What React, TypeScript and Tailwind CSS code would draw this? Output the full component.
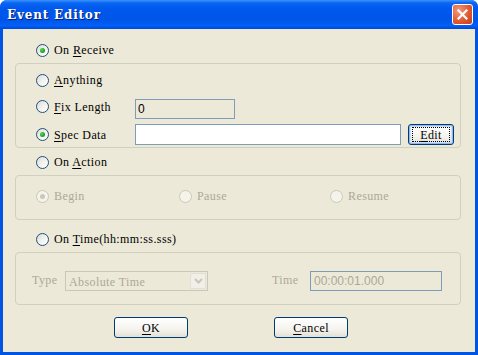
import React from "react";

const FONT = "font-['Liberation_Serif',serif] text-[12px] tracking-[0.4px] leading-none";

function Radio({ checked, disabled, children }: { checked?: boolean; disabled?: boolean; children: React.ReactNode }) {
  return (
    <div className="flex items-center gap-[5px]">
      <div
        className={
          "w-[13px] h-[13px] rounded-full border flex items-center justify-center shrink-0 " +
          (disabled
            ? "border-[#cac8bb] bg-[#f5f4ea]"
            : "border-[#1c5180] bg-[linear-gradient(135deg,#dcdbd5_0%,#f4f3ee_55%,#ffffff_100%)]")
        }
      >
        {checked && (
          <div
            className={
              "w-[5px] h-[5px] rounded-full " +
              (disabled ? "bg-[#cac8bb]" : "bg-[radial-gradient(circle_at_35%_35%,#55d955,#21a121_60%,#1a8a1a)]")
            }
          />
        )}
      </div>
      <span className={FONT + (disabled ? " text-[#aca899]" : " text-black")}>{children}</span>
    </div>
  );
}

function U({ children }: { children: React.ReactNode }) {
  return <span className="underline underline-offset-2">{children}</span>;
}

function Group({ className, children }: { className: string; children: React.ReactNode }) {
  return <div className={"w-[446px] border border-[#d0d0bf] rounded-[4px] box-border " + className}>{children}</div>;
}

function XpButton({ children, focused, w }: { children: React.ReactNode; focused?: boolean; w: string }) {
  return (
    <div
      className={
        w +
        " h-[21px] rounded-[3px] border border-[#003c74] bg-[linear-gradient(180deg,#ffffff_0%,#f4f3ee_60%,#e3e0d4_100%)] flex items-center justify-center box-border " +
        (focused ? "shadow-[inset_0_0_0_1px_#96b8ec,inset_0_0_0_2px_#cde0f8]" : "")
      }
    >
      <div
        className={
          "flex items-center justify-center " +
          (focused ? "border border-dotted border-black w-[calc(100%-6px)] h-[15px]" : "")
        }
      >
        <span className={FONT + " text-black"}>{children}</span>
      </div>
    </div>
  );
}

export default function App() {
  return (
    <div className="w-[478px] h-[355px] bg-[#0055e5] rounded-t-[7px] flex flex-col overflow-hidden">
      {/* title bar */}
      <div className="h-[29px] shrink-0 flex items-center justify-between pl-[7px] pr-[5px] bg-[linear-gradient(180deg,#3d95ff_0%,#0a66f0_10%,#0058ee_30%,#0055e8_70%,#0061f8_88%,#0047d5_100%)]">
        <span className="font-['DejaVu_Serif',serif] font-bold text-[12px] tracking-[0.8px] text-white [text-shadow:1px_1px_0_#0a1e6e] pt-[1px]">
          Event Editor
        </span>
        <div className="w-[21px] h-[21px] rounded-[3px] border border-white bg-[radial-gradient(circle_at_30%_30%,#f29a7c,#e25a31_55%,#c23d18)] flex items-center justify-center box-border">
          <svg width="11" height="11" viewBox="0 0 11 11">
            <path d="M1.5 1.5 L9.5 9.5 M9.5 1.5 L1.5 9.5" stroke="white" strokeWidth="2.2" strokeLinecap="square" />
          </svg>
        </div>
      </div>

      {/* client area */}
      <div className="flex-1 mx-[3px] mb-[3px] bg-[#ece9d8] flex flex-col pl-[12px] pt-[14px]">
        <div className="h-[14px] flex items-center pl-[21px]">
          <Radio checked>
            On <U>R</U>eceive
          </Radio>
        </div>

        <Group className="mt-[6px] h-[85px] pt-[6px] pl-[20px] flex flex-col">
          <div className="h-[20px] flex items-center">
            <Radio>
              <U>A</U>nything
            </Radio>
          </div>
          <div className="h-[20px] mt-[9px] flex items-center">
            <div className="w-[99px] flex items-center self-start pt-[1px]">
              <Radio>
                <U>F</U>ix Length
              </Radio>
            </div>
            <div className="w-[100px] h-[20px] border border-[#7f9db9] bg-[#ece9d8] flex items-center pl-[2px] box-border">
              <span className="font-['Liberation_Sans',sans-serif] text-[12px] text-black leading-none">0</span>
            </div>
          </div>
          <div className="h-[21px] mt-[5px] flex items-center">
            <div className="w-[99px] flex items-center">
              <Radio checked>
                <U>S</U>pec Data
              </Radio>
            </div>
            <div className="w-[266px] h-[21px] border border-[#7f9db9] bg-white box-border" />
            <div className="ml-[7px]">
              <XpButton focused w="w-[46px]">
                <U>E</U>dit
              </XpButton>
            </div>
          </div>
        </Group>

        <div className="h-[14px] mt-[7px] flex items-center pl-[21px]">
          <Radio>
            On <U>A</U>ction
          </Radio>
        </div>

        <Group className="mt-[6px] h-[45px] pt-[13px] pl-[20px] flex">
          <div className="h-[14px] flex items-center">
            <div className="w-[143px]">
              <Radio checked disabled>
                Begin
              </Radio>
            </div>
            <div className="w-[151px]">
              <Radio disabled>Pause</Radio>
            </div>
            <Radio disabled>Resume</Radio>
          </div>
        </Group>

        <div className="h-[14px] mt-[12px] flex items-center pl-[21px]">
          <Radio>
            On <U>T</U>ime(hh:mm:ss.sss)
          </Radio>
        </div>

        <Group className="mt-[6px] h-[53px] pt-[18px] pl-[16px] flex">
          <div className="h-[20px] flex items-center">
            <span className={FONT + " text-[#aca899] w-[33px] -mt-[2px]"}>Type</span>
            <div className="w-[143px] h-[20px] border border-[#c9c7ba] bg-[#ece9d8] flex items-center justify-between pl-[3px] pr-[1px] box-border">
              <span className={FONT + " text-[#aca899] pt-[1px]"}>Absolute Time</span>
              <div className="w-[16px] h-[16px] bg-[#f1efe7] border border-[#e2e0d5] rounded-[1px] flex items-center justify-center box-border">
                <svg width="9" height="6" viewBox="0 0 9 6">
                  <path d="M1 1 L4.5 4.5 L8 1" stroke="#c9c7ba" strokeWidth="2" fill="none" />
                </svg>
              </div>
            </div>
            <span className={FONT + " text-[#aca899] ml-[64px] w-[38px] -mt-[2px]"}>Time</span>
            <div className="w-[132px] h-[20px] border border-[#7f9db9] bg-[#ece9d8] flex items-center pl-[3px] box-border">
              <span className="font-['Liberation_Sans',sans-serif] text-[12px] text-[#aca899] leading-none">00:00:01.000</span>
            </div>
          </div>
        </Group>

        <div className="mt-[12px] flex pl-[99px] gap-[86px]">
          <XpButton w="w-[74px]">
            <U>O</U>K
          </XpButton>
          <XpButton w="w-[74px]">
            <U>C</U>ancel
          </XpButton>
        </div>
      </div>
    </div>
  );
}
